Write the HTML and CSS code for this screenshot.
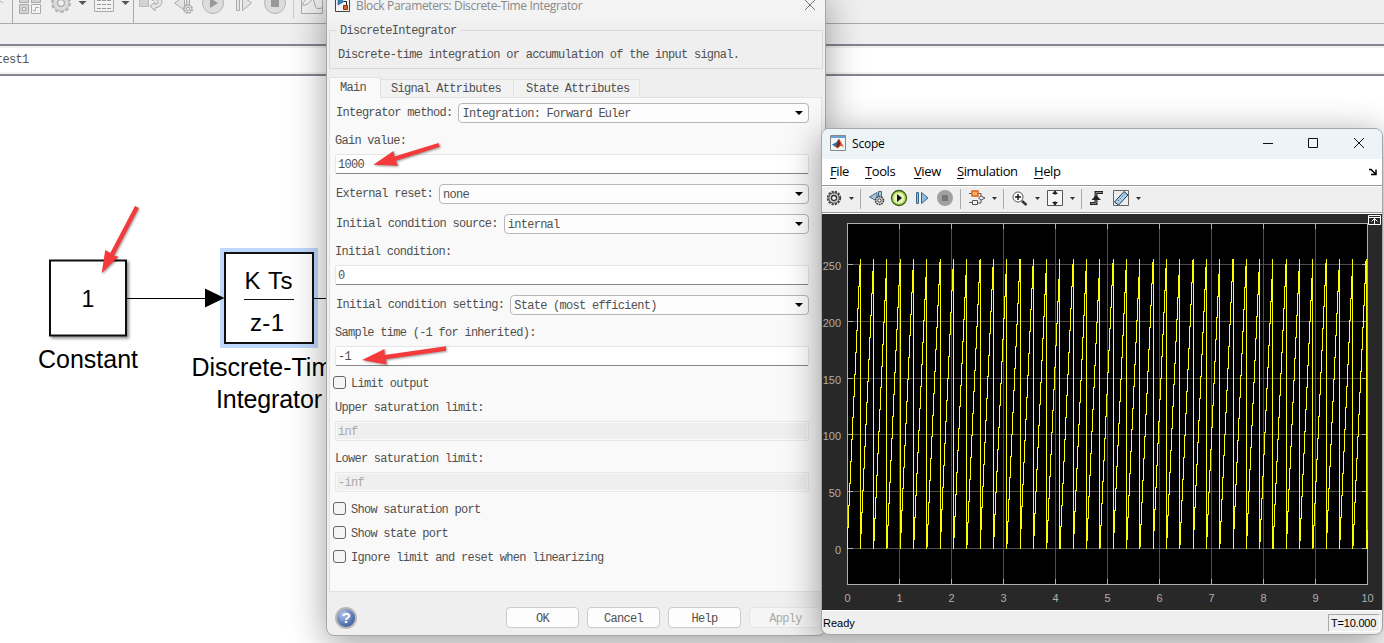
FILE: index.html
```html
<!DOCTYPE html>
<html lang="en">
<head>
    <meta charset="UTF-8">
    <meta name="viewport" content="width=device-width, initial-scale=1.0">
    <title>test1 - Simulink</title>
    <link rel="stylesheet" href="styles.css">
</head>
<body>
    <div class="desktop">
        <!-- model editor -->
        <div class="editor">
            <div class="main-toolbar">
                <svg width="12" height="23" viewBox="0 0 12 23"><path d="M0 1l3 2" stroke="#aaa"/></svg>
                <div class="sep"></div>
                <svg width="32" height="23" viewBox="13 0 32 23" fill="#d2d2d2" stroke="#aaa"><path d="M19.500-4.500h9v7h-9zM31.500-4.500h9v7h-9zM19.500 4.500h9v9h-9z"/><path d="M22.500 7.500h3v3h-3z" fill="#eee"/><path d="M31.500 4.500h9v9h-9z" fill="#f4f4f4"/><path d="M33 10.500h2.500v-3h3.500" fill="none"/></svg>
                <svg width="30" height="23" viewBox="45 0 30 23"><circle cx="61" cy="3" r="9" fill="none" stroke="#b4b4b4" stroke-width="2" stroke-dasharray="3.500 2.150"/><circle cx="61" cy="3" r="8" fill="#dcdcdc" stroke="#b4b4b4"/><circle cx="61" cy="3" r="3.500" fill="#efefef" stroke="#b0b0b0" stroke-width="1.500"/></svg>
                <svg width="14" height="23" viewBox="75 0 14 23"><path d="M78.500 1h8l-4 4z" fill="#555"/></svg>
                <svg width="29" height="23" viewBox="89 0 29 23"><path d="M94.500-4.500h19v16h-19z" fill="#f2f2f2" stroke="#aaa"/><path d="M97 0.500h14M97 4.500h14M97 8.500h14" stroke="#999" stroke-dasharray="4 1"/></svg>
                <svg width="15" height="23" viewBox="118 0 15 23"><path d="M121.500 1h8l-4 4z" fill="#555"/></svg>
                <div class="sep"></div>
                <svg width="34" height="23" viewBox="134 0 34 23"><path d="M139.500-5.500h9v12h-9z" fill="#d2d2d2" stroke="#bbb"/><path d="M152-3q9-2 10 4q0 6-7 7v3l-5-5 5-4v2.500q3 0 3-3t-6-1z" fill="#e4e4e4" stroke="#aaa"/></svg>
                <svg width="30" height="23" viewBox="168 0 30 23"><path d="M184.500-4l-10 7 10 7z" fill="#e4e4e4" stroke="#aaa"/><path d="M186.500-4h3v10h-3z" fill="#ddd" stroke="#aaa"/><circle cx="188" cy="9" r="4" fill="#e4e4e4" stroke="#aaa" stroke-width="2" stroke-dasharray="2.200 .9"/><circle cx="188" cy="9" r="1.700" fill="#eee" stroke="#aaa"/></svg>
                <svg width="32" height="23" viewBox="198 0 32 23"><circle cx="213" cy="3" r="10.500" fill="#dcdcdc" stroke="#b4b4b4"/><path d="M210-2l8 5-8 5z" fill="#999"/></svg>
                <svg width="29" height="23" viewBox="230 0 29 23"><path d="M236.500-4.500h3v15h-3zM242.500-4l9 7-9 7.500z" fill="#e4e4e4" stroke="#aaa"/></svg>
                <svg width="34" height="23" viewBox="259 0 34 23"><circle cx="275" cy="3" r="10.500" fill="#dcdcdc" stroke="#b4b4b4"/><path d="M271-1h8v8h-8z" fill="#999"/></svg>
                <div class="sep short"></div>
                <svg width="34" height="23" viewBox="294 0 34 23"><path d="M301.500-5.500h21v19h-21z" fill="#f2f2f2" stroke="#aaa"/><path d="M302 5q5-9 9-7t4 7 7 3" fill="none" stroke="#aaa"/><path d="M302 5q6 2 12-9" fill="none" stroke="#aaa"/></svg>
            </div>
            <div class="tab-strip"></div>
            <div class="breadcrumb">test1</div>
            <svg class="model" width="1384" height="567" viewBox="0 76 1384 567">
                <defs>
                    <filter id="blockShadow" x="-10%" y="-10%" width="130%" height="130%"><feDropShadow dx="2" dy="2" stdDeviation="1.500" flood-opacity=".45"/></filter>
                </defs>
                <rect x="50" y="260.500" width="76" height="75" fill="#fff" stroke="#111" stroke-width="2" filter="url(#blockShadow)"/>
                <text x="88" y="307" font-size="23" text-anchor="middle">1</text>
                <text x="88" y="368" font-size="25" text-anchor="middle" textLength="100">Constant</text>
                <rect x="220" y="248" width="98" height="100" fill="#bfd8fb"/>
                <path d="M127 298.500h80M314 298.500h14" stroke="#000" stroke-width="1.200"/>
                <path d="M205 288.500v19l19.500-9.500z"/>
                <rect x="225" y="253" width="88" height="90" fill="#fff" stroke="#111" stroke-width="2"/>
                <text x="268.500" y="289" font-size="24" text-anchor="middle" textLength="48">K Ts</text>
                <path d="M244 299.500h50" stroke="#111"/>
                <text x="267" y="331" font-size="24" text-anchor="middle" textLength="34">z-1</text>
                <text x="191.500" y="376" font-size="25">Discrete-Time</text>
                <text x="216" y="408" font-size="25" textLength="106">Integrator</text>
            </svg>
        </div>

        <!-- block parameters dialog -->
        <div class="window dialog">
            <div class="dialog-title">
                <svg width="16" height="16" viewBox="0 0 16 16"><path d="M.500.500h14v14H.500z" fill="#f4f4f4" stroke="#444"/><path d="M3 1v7l6-3.500z" fill="#2e86c8" stroke="#174f80" stroke-width=".6"/><path d="M9 4.500h2.500v4" stroke="#222" fill="none"/><path d="M8.500 8.500h4v4h-4z" fill="#e0622c" stroke="#873510"/></svg>
                <span>Block Parameters: Discrete-Time Integrator</span>
                <svg class="close" width="12" height="12" viewBox="0 0 12 12"><path d="M1 1l10 10M11 1L1 11" stroke="#777"/></svg>
            </div>
            <fieldset>
                <legend>DiscreteIntegrator</legend>
                <p>Discrete-time integration or accumulation of the input signal.</p>
            </fieldset>
            <div class="tabs">
                <div class="tab active">Main</div>
                <div class="tab signal">Signal Attributes</div>
                <div class="tab state">State Attributes</div>
            </div>
            <div class="pane">
                <div class="row first"><label>Integrator method:</label><div class="select">Integration: Forward Euler</div></div>
                <div class="caption">Gain value:</div>
                <div class="field">1000</div>
                <div class="row"><label>External reset:</label><div class="select">none</div></div>
                <div class="row"><label>Initial condition source:</label><div class="select">internal</div></div>
                <div class="caption">Initial condition:</div>
                <div class="field">0</div>
                <div class="row"><label>Initial condition setting:</label><div class="select">State (most efficient)</div></div>
                <div class="caption">Sample time (-1 for inherited):</div>
                <div class="field">-1</div>
                <div class="check"><i></i>Limit output</div>
                <div class="caption">Upper saturation limit:</div>
                <div class="field disabled">inf</div>
                <div class="caption">Lower saturation limit:</div>
                <div class="field disabled">-inf</div>
                <div class="check"><i></i>Show saturation port</div>
                <div class="check"><i></i>Show state port</div>
                <div class="check"><i></i>Ignore limit and reset when linearizing</div>
            </div>
            <div class="buttons">
                <div class="help">?</div>
                <div class="btn">OK</div>
                <div class="btn">Cancel</div>
                <div class="btn">Help</div>
                <div class="btn disabled">Apply</div>
            </div>
        </div>

        <!-- scope -->
        <div class="window scope">
            <div class="scope-title">
                <svg width="16" height="16" viewBox="0 0 16 16"><path d="M.500.500h15v15H.500z" fill="#f3f5f7" stroke="#888"/><path d="M1 1h14v2H1z" fill="#6ba3d0"/><path d="M2 9.500l4-2 3-4-1.500 7-2 1.500z" fill="#2a6ea8"/><path d="M9 3.500l5 9-3-2-3.500 3-2-2q2-1 3.500-8z" fill="#d9481c"/><path d="M9 4l1 5-2.500 4-1-1.500z" fill="#7a1f14"/></svg>
                <span>Scope</span>
                <svg class="controls" width="104" height="16" viewBox="0 0 104 16" fill="none" stroke="#111"><path d="M1 8.500h10M46.500 3.500h9v9h-9zM92 3l10 10M102 3L92 13"/></svg>
            </div>
            <div class="menu">
                <span class="file"><u>F</u>ile</span>
                <span class="tools"><u>T</u>ools</span>
                <span class="view"><u>V</u>iew</span>
                <span class="simulation"><u>S</u>imulation</span>
                <span><u>H</u>elp</span>
                <svg class="dock" width="8" height="8" viewBox="0 0 8 8"><path d="M0 1.500h2l4 4M7 1.500v5H2" fill="none" stroke="#000" stroke-width="1.500"/></svg>
            </div>
            <div class="scope-toolbar">
                <svg width="23" height="24" viewBox="822 187 23 24"><circle cx="834" cy="198" r="6.200" fill="none" stroke="#444" stroke-width="2" stroke-dasharray="2.200 1.050"/><circle cx="834" cy="198" r="5.200" fill="#ccc" stroke="#555"/><circle cx="834" cy="198" r="2.500" fill="#fff" stroke="#333" stroke-width="1.300"/></svg>
                <svg width="14" height="24" viewBox="0 0 14 24"><path d="M4 10h5L6.500 13z" fill="#333"/></svg>
                <div class="sep"></div>
                <svg width="26" height="24" viewBox="862 187 26 24"><path d="M877 192.500l-7.500 4.500 7.500 4z" fill="#a9c8dd" stroke="#47677f"/><path d="M878.500 191.500h3v6h-3z" fill="#a9c8dd" stroke="#47677f"/><circle cx="879.500" cy="200.500" r="4" fill="#ddd" stroke="#444" stroke-width="1.600" stroke-dasharray="1.800 .7"/><circle cx="879.500" cy="200.500" r="1.700" fill="#fff" stroke="#333"/></svg>
                <svg width="22" height="24" viewBox="888 187 22 24"><circle cx="899" cy="198" r="7.500" fill="#b9df55" stroke="#3c5d20" stroke-width="1.300"/><circle cx="899" cy="198" r="5.200" fill="#e8f6c4"/><path d="M897 194l5 4-5 4z" fill="#111"/></svg>
                <svg width="23" height="24" viewBox="910 187 23 24"><path d="M916.500 192.500h2v11h-2zM921.500 192.500l6.500 5.500-6.500 5.500z" fill="#8dbce4" stroke="#39658d"/></svg>
                <svg width="26" height="24" viewBox="933 187 26 24"><circle cx="945" cy="198" r="8" fill="#a0a0a0"/><path d="M942 195h6v6h-6z" fill="#777"/></svg>
                <div class="sep"></div>
                <svg width="26" height="24" viewBox="962 187 26 24" fill="none"><path d="M969 193.500h3M978 193.500h3v3M981 199v4h-3M969 202.500h3" stroke="#555"/><path d="M972 191h6v5h-6z" fill="#ffae70" stroke="#dc640f" stroke-width="1.500"/><path d="M972.500 200.500h5v4h-5zM978.500 198l2.500-2 4 2-4 2z" fill="#f4f4f4" stroke="#555"/></svg>
                <svg width="14" height="24" viewBox="0 0 14 24"><path d="M4 10h5L6.500 13z" fill="#333"/></svg>
                <div class="sep"></div>
                <svg width="25" height="24" viewBox="1005 187 25 24"><circle cx="1018" cy="197" r="5" fill="#fff" stroke="#555"/><path d="M1015 197h6M1018 194v6" stroke="#111" stroke-width="1.400"/><path d="M1022 201l4.500 4" stroke="#333" stroke-width="2.500"/></svg>
                <svg width="14" height="24" viewBox="0 0 14 24"><path d="M5 10h5L7.500 13z" fill="#333"/></svg>
                <svg width="22" height="24" viewBox="1044 187 22 24"><path d="M1047.500 190.500h15v15h-15z" fill="#f7f7f7" stroke="#555"/><path d="M1055 195v-4M1055 201v4" stroke="#222"/><path d="M1052 194l3-3.500 3 3.500zM1052 202l3 3.500 3-3.500z" fill="#222"/></svg>
                <svg width="14" height="24" viewBox="0 0 14 24"><path d="M4 10h5L6.500 13z" fill="#333"/></svg>
                <div class="sep"></div>
                <svg width="25" height="24" viewBox="1083 187 25 24" fill="none"><path d="M1090 203.500h6v-11h7" stroke="#222" stroke-width="3"/><path d="M1091 203.500h5v-11h6.500" stroke="#888"/><path d="M1091.500 200l4.500-5 5 5z" fill="#222"/></svg>
                <svg width="24" height="24" viewBox="1108 187 24 24"><path d="M1113.500 190.500h15v15h-15z" fill="#eee" stroke="#666"/><path d="M1114.500 202l9.500-10.500 4 3.500-9.500 10z" fill="#a9d2ee" stroke="#234"/><path d="M1118 201l7-7.500" stroke="#234" stroke-dasharray="1 2"/></svg>
                <svg width="14" height="24" viewBox="0 0 14 24"><path d="M4 10h5L6.500 13z" fill="#333"/></svg>
            </div>
            <svg class="plot" width="560" height="396" viewBox="822 214 560 396">
                <rect x="847.500" y="223.500" width="520" height="361" fill="#000"/>
                <g id="grid" stroke="#4d4d4d"></g>
                <g id="ticks" stroke="#afafaf"></g>
                <rect x="847.500" y="223.500" width="520" height="361" fill="none" stroke="#afafaf"/>
                <path id="signal" fill="none" stroke="#ffff00" shape-rendering="crispEdges"/>
                <g id="labels" fill="#afafaf" font-size="11"></g>
                <g stroke="#fff" fill="none"><path d="M1368.500 215.500h12v9h-12zM1368 217.500h13M1374.500 224v-5M1371.500 221.500l3-3 3 3"/></g>
            </svg>
            <div class="status"><span>Ready</span><span class="time">T=10.000</span></div>
        </div>

        <svg class="arrows" width="1384" height="643" viewBox="0 0 1384 643">
            <path d="M101.700 273.300L105.300 250l5 3L135 206l3.800 2-24.800 47.500 4.300 1.200z"/>
            <path d="M373.300 164.700L393.500 151l1 5.500L438.500 143l1.200 3.800L396 160.800l2 4.900z"/>
            <path d="M362 360l22.500-11 .2 6L446 346.300v4.500L386 359.300l.7 5.200z"/>
        </svg>
    </div>
    <script src="script.js"></script>
</body>
</html>
```
FILE: styles.css
```css
* {
    box-sizing: border-box;
}
body {
    margin: 0;
    font-family: "Open Sans", sans-serif;
    font-size: 12px;
}
svg {
    display: block;
    flex: none;
}
.desktop {
    position: relative;
    width: 1384px;
    height: 643px;
    overflow: hidden;
    background: #fff;
}
.main-toolbar {
    display: flex;
    height: 24px;
    background: #efefef;
    border-bottom: 1px solid #aaa;
}
.main-toolbar .sep {
    width: 1px;
    height: 23px;
    background: #aaa;
}
.main-toolbar .sep.short {
    height: 18px;
    background: #c8c8c8;
}
.tab-strip {
    height: 22px;
    background: #efefef;
    border-bottom: 2px solid #858591;
}
.breadcrumb {
    height: 30px;
    line-height: 28px;
    background: #fff;
    border-bottom: 2px solid #858591;
    box-shadow: inset 0 2px #f1f1f1, inset 0 -2px #f4f4f4;
    font-family: "Liberation Mono", monospace;
    font-size: 12px;
    letter-spacing: -.7px;
    text-indent: -4px;
    color: #555;
}
.model {
    font-family: "Liberation Sans", sans-serif;
}
.window {
    position: absolute;
    overflow: hidden;
}

/* dialog */
.dialog {
    left: 326px;
    top: -10px;
    width: 500px;
    height: 646px;
    border: 1px solid #a6a6a6;
    border-radius: 8px;
    background: #efefef;
    box-shadow: 0 8px 36px rgba(0, 0, 0, .38);
    font-family: "Liberation Mono", monospace;
    font-size: 12px;
    letter-spacing: -.73px;
    color: #505050;
}
.dialog-title {
    display: flex;
    align-items: center;
    height: 30px;
    padding: 0 9px 2px 8px;
    background: #f3f3f3;
    font-family: "Open Sans", sans-serif;
    font-size: 12px;
    letter-spacing: -.35px;
    color: #888;
}
.dialog-title span {
    margin-left: 5px;
}
.dialog-title .close {
    margin-left: auto;
}
fieldset {
    height: 46px;
    margin: 2px 2px 0;
    padding: 0 8px;
    border: 1px solid #d9d9d9;
}
legend {
    height: 15px;
    margin-left: -2px;
    padding: 0 4px;
    line-height: 17px;
}
fieldset p {
    margin: 8px 0 0;
    line-height: 18px;
}
.tabs {
    display: flex;
    align-items: flex-end;
    height: 20px;
    margin: 8px 0 0 2px;
}
.tab {
    height: 18px;
    padding-left: 10px;
    line-height: 18px;
    border: 1px solid #e2e2e2;
    border-width: 1px 1px 0 0;
    background: #f2f2f2;
}
.tab.active {
    width: 52px;
    height: 21px;
    margin-bottom: -1px;
    border-left-width: 1px;
    line-height: 20px;
    background: #f9f9f9;
    z-index: 1;
}
.tab.signal {
    width: 133px;
}
.tab.state {
    width: 126px;
    padding-left: 12px;
}
.pane {
    width: 493px;
    height: 495px;
    margin-left: 2px;
    padding: 5px 12px 0 5px;
    border: 1px solid #e2e2e2;
    background: #f9f9f9;
}
.row {
    display: flex;
    height: 20px;
    margin-top: 10px;
    line-height: 20px;
}
.row.first {
    margin-top: 0;
}
.row label {
    margin-right: 6px;
    padding-left: 1px;
    white-space: nowrap;
}
.select {
    position: relative;
    flex: 1;
    padding-left: 3px;
    border: 1px solid #b8b8b8;
    border-radius: 4px;
    background: #fdfdfd;
}
.select::after {
    content: "";
    position: absolute;
    right: 5px;
    top: 7px;
    border: 4px solid transparent;
    border-top-color: #000;
    border-bottom: 0;
}
.caption {
    height: 20px;
    margin-top: 8px;
    line-height: 20px;
}
.field {
    height: 20px;
    margin-top: 3px;
    padding-left: 2px;
    line-height: 20px;
    border: 1px solid #e6e6e6;
    border-bottom-color: #868686;
    border-radius: 2px;
    background: #fff;
}
.field.disabled {
    border-color: #e8e8e8;
    background: #efefef;
    box-shadow: inset 0 0 0 1px #fafafa;
    color: #aaa;
}
.check {
    display: flex;
    height: 14px;
    margin: 10px 0 0 -2px;
    line-height: 17px;
}
.check i {
    width: 13px;
    height: 13px;
    margin-right: 5px;
    border: 1px solid #666;
    border-radius: 3px;
    background: #f5f5f5;
}
.buttons {
    display: flex;
    gap: 8px;
    margin-top: 15px;
    padding-left: 8px;
}
.btn {
    width: 73px;
    height: 21px;
    flex: none;
    border: 1px solid #ccc;
    border-radius: 4px;
    background: #fdfdfd;
    line-height: 22px;
    text-align: center;
}
.btn.disabled {
    background: #f5f5f5;
    border-color: #e4e4e4;
    color: #aaa;
}
.help {
    width: 22px;
    height: 22px;
    margin-right: 141px;
    border: 2px solid #b8b8b8;
    border-radius: 50%;
    background: radial-gradient(circle at 35% 30%, #b7c9e8, #5673b0 60%, #31498a);
    font: bold 15px/18px "Liberation Sans", sans-serif;
    text-align: center;
    color: #fff;
}

/* scope window */
.scope {
    left: 821px;
    top: 128px;
    width: 562px;
    height: 507px;
    border: 1px solid #a6a6a6;
    border-radius: 8px;
    background: #efefef;
    box-shadow: 0 8px 36px rgba(0, 0, 0, .42);
}
.scope-title {
    display: flex;
    align-items: center;
    height: 30px;
    padding: 0 16px 2px 8px;
    background: #ecf4f8;
}
.scope-title span {
    margin-left: 6px;
    letter-spacing: -.2px;
}
.scope-title .controls {
    margin-left: auto;
}
.menu {
    display: flex;
    height: 27px;
    padding: 0 5px 0 8px;
    line-height: 25px;
    border-bottom: 1px solid #999;
    background: #fff;
    font-size: 13px;
    letter-spacing: -.4px;
}
.menu u {
    text-underline-offset: 2px;
}
.menu .file {
    width: 35px;
}
.menu .tools {
    width: 49px;
}
.menu .view {
    width: 43px;
}
.menu .simulation {
    width: 77px;
}
.menu .dock {
    margin: 9px 0 0 auto;
}
.scope-toolbar {
    display: flex;
    height: 28px;
    border-top: 1px solid #fff;
    border-bottom: 1px solid #fff;
    box-shadow: inset 0 -1px #999;
}
.scope-toolbar .sep {
    width: 1px;
    height: 20px;
    margin: 2px 1px 0;
    background: #aaa;
}
.plot {
    background: #282828;
    font-family: "Liberation Sans", sans-serif;
}
.status {
    display: flex;
    justify-content: space-between;
    height: 24px;
    padding: 4px 2px 2px 1px;
    border-top: 1px solid #fff;
    font: 11px/17px "Liberation Sans", sans-serif;
}
.status .time {
    width: 52px;
    height: 18px;
    margin-top: -1px;
    padding-left: 2px;
    border: 1px solid #aaa;
    border-right-color: #fff;
    border-bottom-color: #fff;
    letter-spacing: -.2px;
}
.arrows {
    position: absolute;
    left: 0;
    top: 0;
    fill: #f43a3a;
    filter: drop-shadow(1px 1px 1px rgba(0, 0, 0, .4));
}
```
FILE: script.js
```js
const left = 847.5;
const secondWidth = 52;
const zeroY = 548.5;
const unitHeight = 1.136;
const period = 0.256;

const grid = document.getElementById('grid');
const ticks = document.getElementById('ticks');
const labels = document.getElementById('labels');

function addLine(group, d) {
    const path = document.createElementNS('http://www.w3.org/2000/svg', 'path');
    path.setAttribute('d', d);
    group.appendChild(path);
}

function addLabel(x, y, anchor, value) {
    const text = document.createElementNS('http://www.w3.org/2000/svg', 'text');
    text.setAttribute('x', x);
    text.setAttribute('y', y);
    text.setAttribute('text-anchor', anchor);
    text.textContent = value;
    labels.appendChild(text);
}

for (let i = 0; i <= 10; i++) {
    const x = left + i * secondWidth;
    addLine(grid, `M${x} 223v361`);
    addLine(ticks, `M${x} 224v5M${x} 584v-5`);
    addLabel(x, 602, 'middle', i);
}

for (let v = 0; v <= 250; v += 50) {
    const y = Math.floor(zeroY - v * unitHeight) + 0.5;
    addLine(grid, `M848 ${y}h519`);
    addLine(ticks, `M848 ${y}h5M1367 ${y}h-5`);
    addLabel(841, y + 5, 'end', v);
}

// the counter wraps at 256 every 0.256 s; one vertical step per pixel column
let d = `M${left} ${zeroY}`;
let lastTooth = 0;
for (let px = 1; px <= 10 * secondWidth; px++) {
    const t = px / secondWidth;
    const tooth = Math.floor(t / period);
    if (tooth !== lastTooth) {
        d += `V259V${zeroY}`;
        lastTooth = tooth;
    }
    const value = (t - tooth * period) * 1000;
    const y = Math.round(zeroY - value * unitHeight) + 0.5;
    d += `V${y}H${left + px}`;
}
d += `V${zeroY}`;
document.getElementById('signal').setAttribute('d', d);
```
